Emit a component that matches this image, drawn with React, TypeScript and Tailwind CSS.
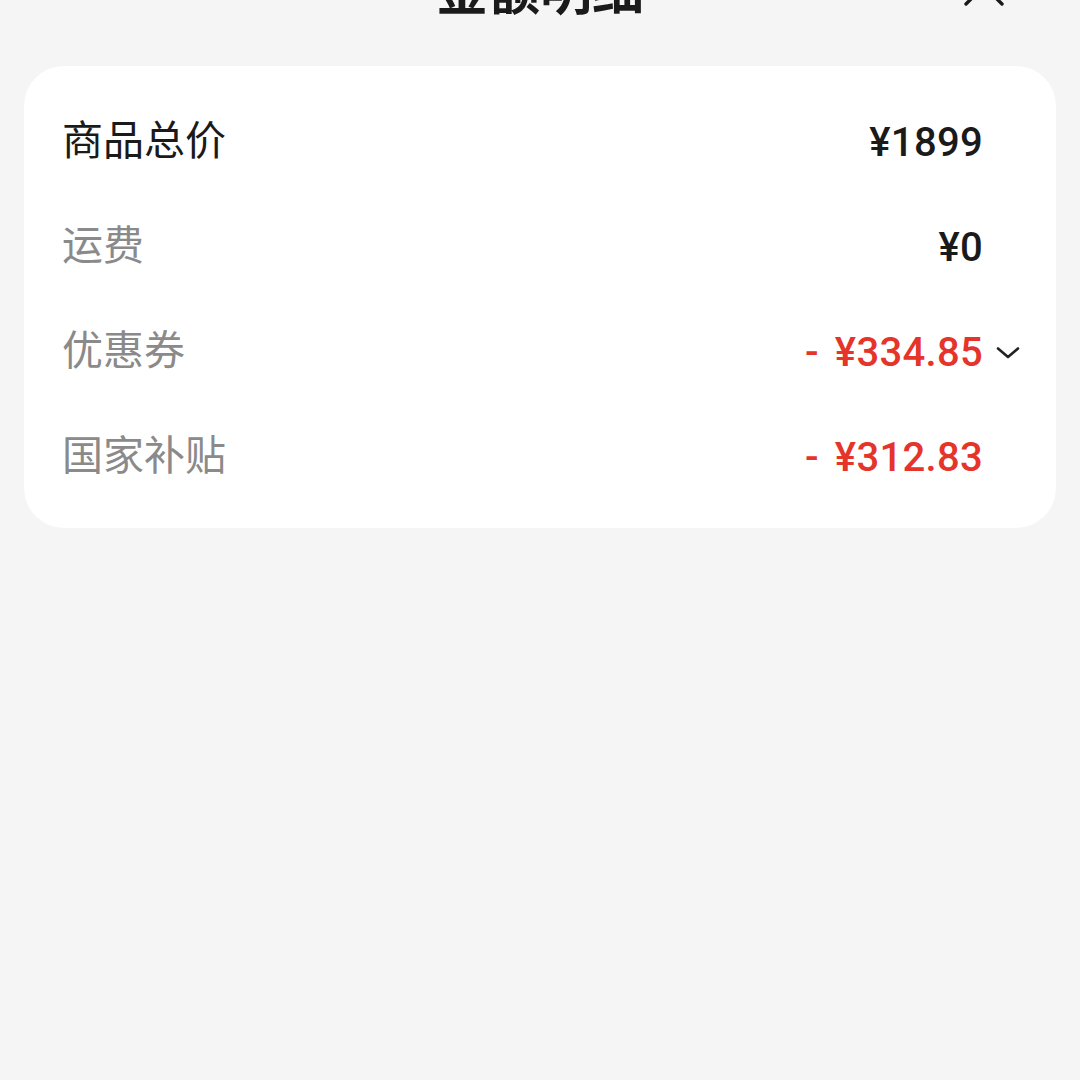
import React from 'react';

const CJK = "font-['Noto_Sans_CJK_SC','Noto_Sans',sans-serif]";
const NUM = "font-['Roboto','Noto_Sans_CJK_SC',sans-serif]";

type Row = {
  label: string;
  value: string;
  strong?: boolean;
  discount?: boolean;
  expandable?: boolean;
};

const ROWS: Row[] = [
  { label: '商品总价', value: '¥1899', strong: true },
  { label: '运费', value: '¥0' },
  { label: '优惠券', value: '¥334.85', discount: true, expandable: true },
  { label: '国家补贴', value: '¥312.83', discount: true },
];

const Chevron = () => (
  <svg width="24" height="24" viewBox="0 0 24 24" fill="none" className="text-[#222]">
    <path d="M2 7.5 L12 16 L22 7.5" stroke="currentColor" strokeWidth="2.6" strokeLinecap="round" strokeLinejoin="round" />
  </svg>
);

const CloseIcon = () => (
  <svg width="44" height="44" viewBox="0 0 44 44" fill="none" className="text-[#1a1a1a]">
    <path d="M4 4 L40 40 M40 4 L4 40" stroke="currentColor" strokeWidth="3.4" strokeLinecap="round" />
  </svg>
);

const PriceRow: React.FC<{ row: Row }> = ({ row }) => (
  <div className="flex h-[105px] items-center justify-between pl-[38px] pr-[73px]">
    <span
      className={`${CJK} mb-[10px] text-[41px] leading-none ${row.strong ? 'text-[#1a1a1a]' : 'text-[#8a8a8a]'}`}
    >
      {row.label}
    </span>
    <div className="flex items-center">
      <span
        className={`${NUM} text-[40px] font-medium leading-none tracking-[0.3px] ${
          row.discount ? 'text-[#e5342a]' : 'text-[#1a1a1a]'
        }`}
      >
        {row.discount && <span className="mr-[16px]">-</span>}
        {row.value}
      </span>
      {row.expandable && (
        <span className="ml-[13px] -mr-[37px] flex">
          <Chevron />
        </span>
      )}
    </div>
  </div>
);

export default function App() {
  return (
    <div className="min-h-[1080px] w-[1080px] overflow-hidden bg-[#f5f5f5]">
      <div className="relative flex h-[66px] justify-center">
        <span className={`${CJK} -mt-[38px] text-[52px] font-bold leading-none text-[#1a1a1a]`}>
          金额明细
        </span>
        <span className="absolute right-[74px] top-[-36px]">
          <CloseIcon />
        </span>
      </div>
      <div className="mx-[24px] rounded-[40px] bg-white pb-[18px] pt-[24px]">
        {ROWS.map((row) => (
          <PriceRow key={row.label} row={row} />
        ))}
      </div>
    </div>
  );
}
